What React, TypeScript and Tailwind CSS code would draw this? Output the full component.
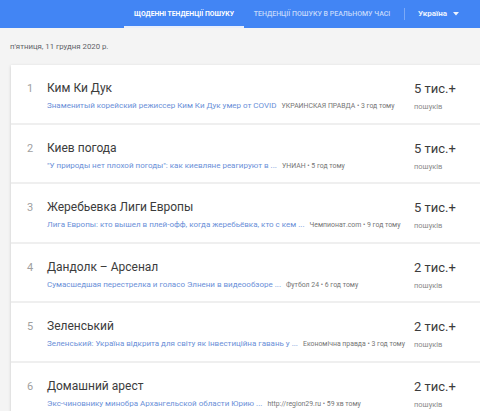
import React from 'react';

type Trend = {
    rank: number;
    title: string;
    article: string;
    source: string;
    count: string;
};

const trends: Trend[] = [
    { rank: 1, title: 'Ким Ки Дук', article: 'Знаменитый корейский режиссер Ким Ки Дук умер от COVID', source: 'УКРАИНСКАЯ ПРАВДА • 3 год тому', count: '5 тис.+' },
    { rank: 2, title: 'Киев погода', article: '"У природы нет плохой погоды": как киевляне реагируют в ...', source: 'УНИАН • 5 год тому', count: '5 тис.+' },
    { rank: 3, title: 'Жеребьевка Лиги Европы', article: 'Лига Европы: кто вышел в плей-офф, когда жеребьёвка, кто с кем ...', source: 'Чемпионат.com • 9 год тому', count: '5 тис.+' },
    { rank: 4, title: 'Дандолк – Арсенал', article: 'Сумасшедшая перестрелка и голасо Элнени в видеообзоре ...', source: 'Футбол 24 • 6 год тому', count: '2 тис.+' },
    { rank: 5, title: 'Зеленський', article: 'Зеленський: Україна відкрита для світу як інвестиційна гавань у ...', source: 'Економічна правда • 3 год тому', count: '2 тис.+' },
    { rank: 6, title: 'Домашний арест', article: 'Экс-чиновнику минобра Архангельской области Юрию ...', source: 'http://region29.ru • 59 хв тому', count: '2 тис.+' },
];

const App = () => {
    return (
        <div className="w-[480px] h-[411px] overflow-hidden bg-[#f4f4f4] font-['Roboto',sans-serif]">
            {/* Top tabs */}
            <div className="h-[28px] bg-[#4285f4] flex items-stretch">
                <div className="w-[124px]" />
                <div className="w-[120px] flex items-center justify-center border-b-2 border-[#e8eefb] pt-[2px]">
                    <span className="text-[6.8px] font-bold text-white">ЩОДЕННІ ТЕНДЕНЦІЇ ПОШУКУ</span>
                </div>
                <div className="w-[160px] flex items-center justify-center pr-[4px]">
                    <span className="text-[7px] font-medium text-white/70">ТЕНДЕНЦІЇ ПОШУКУ В РЕАЛЬНОМУ ЧАСІ</span>
                </div>
                <div className="flex items-center">
                    <div className="w-px h-[12px] bg-white/30" />
                    <span className="ml-[13px] text-[8px] font-bold text-white/90">Україна</span>
                    <svg className="ml-[6px]" width="6" height="4" viewBox="0 0 6 4">
                        <path d="M0 0 L6 0 L3 3.5 Z" fill="rgba(255,255,255,0.9)" />
                    </svg>
                </div>
            </div>

            {/* Date */}
            <div className="pl-[10px] pt-[13px] h-[37px] text-[7.8px] text-[#5f6368]">п'ятниця, 11 грудня 2020 р.</div>

            {/* Feed */}
            <div className="ml-[11px] w-[490px] bg-white shadow-[0_1px_3px_rgba(0,0,0,0.18)] divide-y-2 divide-[#efefef]">
                {trends.map((t) => (
                    <div key={t.rank} className="h-[59.5px] flex items-start pt-[16px]">
                        <div className="w-[36px] pl-[16px] text-[11px] leading-[15px] text-[#a0a0a0]">{t.rank}</div>
                        <div className="flex-1 min-w-0">
                            <div className="text-[12px] leading-[15px] text-[#3c3c3c]">{t.title}</div>
                            <div className="mt-[4px] flex items-baseline whitespace-nowrap">
                                <span className="text-[8px] text-[#6a8fd8]">{t.article}</span>
                                <span className="ml-[5px] text-[6.9px] text-[#757575]">{t.source}</span>
                            </div>
                        </div>
                        <div className="w-[87px]">
                            <div className="text-[13px] leading-[15px] text-[#3c3c3c]">{t.count}</div>
                            <div className="mt-[5px] text-[7.5px] text-[#8a8a8a]">пошуків</div>
                        </div>
                    </div>
                ))}
            </div>
        </div>
    );
};

export default App;
